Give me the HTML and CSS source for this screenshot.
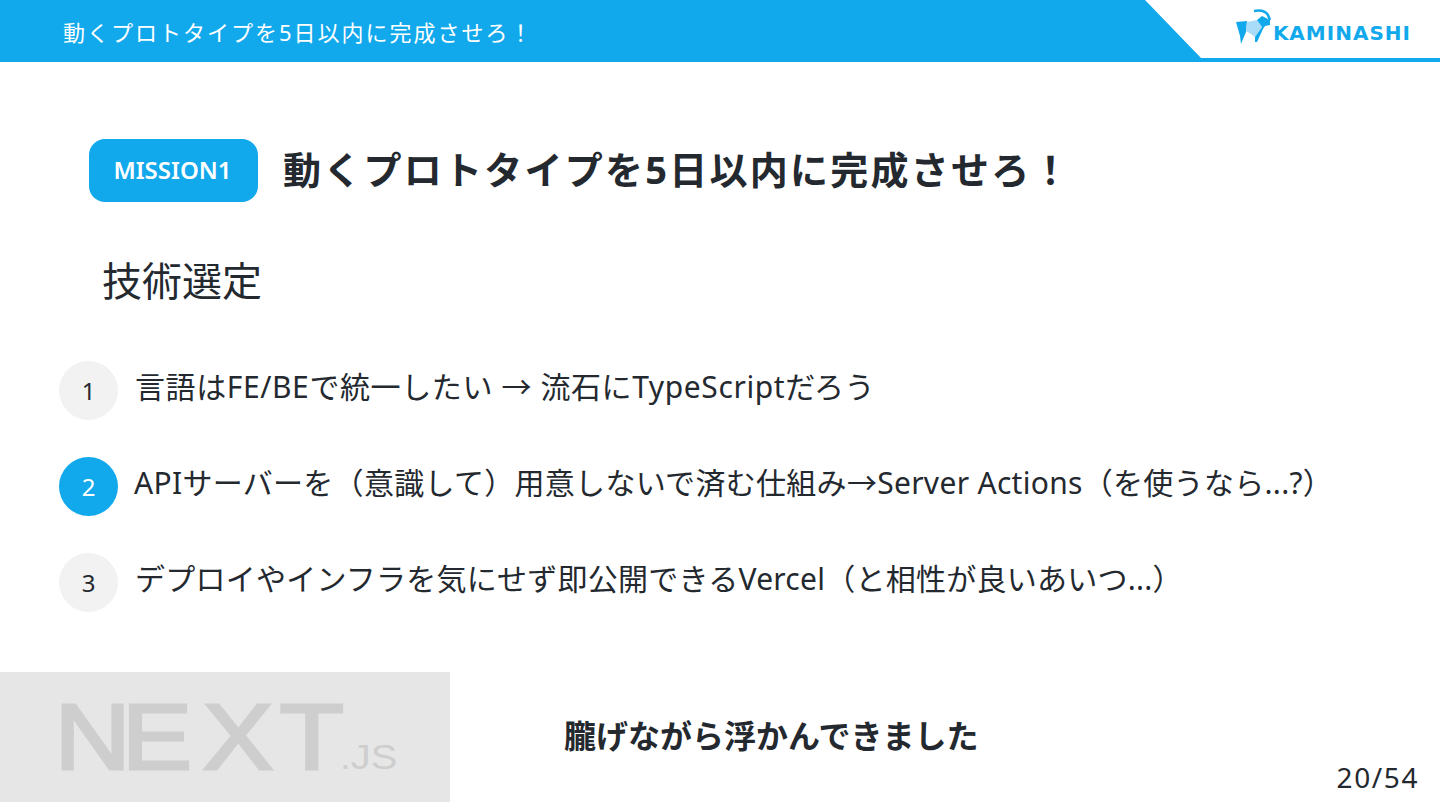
FILE: index.html
```html
<!DOCTYPE html>
<html lang="ja">
<head>
<meta charset="utf-8">
<title>MISSION1</title>
<link rel="stylesheet" href="styles.css">
</head>
<body>
<div class="slide">
  <header class="topbar">
    <div class="topbar-title">動くプロトタイプを5日以内に完成させろ！</div>
    <div class="brand">
      <svg class="goat" width="38" height="38" viewBox="0 0 38 38">
        <path fill="#12a9ec" d="M1 14 L12 13 L11 24 L6 36 L5 28 Z"/>
        <path fill="#a8dcf8" d="M12 14 L22 12 L27 19 L20 29 L16 26 L11 23 Z"/>
        <path fill="#12a9ec" d="M22 12 L27 8 L35 12 L35 17 L30 18 L28 21 L22 34 L20 34 L20 29 L27 19 Z"/>
        <path fill="none" stroke="#12a9ec" stroke-width="2.5" d="M19 3 Q29 1 33 7 L35 12"/>
      </svg>
      <span class="wordmark">KAMINASHI</span>
    </div>
  </header>

  <section class="mission">
    <span class="badge">MISSION1</span>
    <h1 class="mission-title">動くプロトタイプを5日以内に完成させろ！</h1>
  </section>

  <h2 class="section-title">技術選定</h2>

  <ol class="steps">
    <li class="step"><span class="num">1</span><span class="step-text wide">言語はFE/BEで統一したい → 流石にTypeScriptだろう</span></li>
    <li class="step active"><span class="num">2</span><span class="step-text tight">APIサーバーを（意識して）用意しないで済む仕組み→Server Actions（を使うなら...?）</span></li>
    <li class="step"><span class="num">3</span><span class="step-text">デプロイやインフラを気にせず即公開できるVercel（と相性が良いあいつ...）</span></li>
  </ol>

  <footer class="bottom">
    <div class="next-panel">
      <svg class="next-logo" width="450" height="130" viewBox="0 0 450 130">
        <text class="next-wordmark" y="97"><tspan class="next-letters" x="48 107 178 245.5">NEXT</tspan><tspan class="next-js" x="298">.JS</tspan></text>
      </svg>
    </div>
    <p class="caption">朧げながら浮かんできました</p>
    <span class="page">20/54</span>
  </footer>
</div>
</body>
</html>
```
FILE: styles.css
```css
* { box-sizing: border-box; }
html, body { margin: 0; padding: 0; background: #fff; }
body { width: 1440px; height: 810px; overflow: hidden; }
.slide {
  width: 1440px;
  height: 810px;
  display: flex;
  flex-direction: column;
  color: #24292f;
  font-family: "Noto Sans", "Noto Sans CJK JP", sans-serif;
}
.topbar {
  height: 62px;
  flex: none;
  position: relative;
  display: flex;
  align-items: center;
  justify-content: space-between;
  padding: 0 29px 0 63px;
}
.topbar::before {
  content: "";
  position: absolute;
  inset: 0;
  background: #12a9ec;
  clip-path: polygon(0 0, 1145px 0, 1201px 58px, 100% 58px, 100% 100%, 0 100%);
}
.topbar-title {
  position: relative;
  color: #fff;
  font-size: 22px;
  font-weight: 400;
  letter-spacing: 2px;
  margin-top: -1px;
}
.brand { position: relative; display: flex; align-items: center; gap: 0; margin-top: 3px; }
.goat { display: block; margin-bottom: 12px; }
.wordmark {
  font-family: "DejaVu Sans", sans-serif;
  font-weight: 700;
  font-size: 20px;
  letter-spacing: 1px;
  color: #12a9ec;
}
.mission {
  display: flex;
  align-items: center;
  gap: 25px;
  margin: 77px 0 0 89px;
}
.badge {
  width: 169px;
  height: 63px;
  background: #12a9ec;
  border-radius: 16px;
  color: #fff;
  font-size: 24px;
  font-weight: 600;
  display: flex;
  align-items: center;
  justify-content: center;
  padding: 0 2px 2px 0;
}
.mission-title {
  margin: -6px 0 0;
  font-size: 38px;
  font-weight: 700;
  letter-spacing: 2.25px;
}
.section-title {
  margin: 47px 0 0 102px;
  font-size: 40px;
  font-weight: 400;
  line-height: 64px;
}
.steps {
  list-style: none;
  margin: 48px 0 0 59px;
  padding: 0;
  display: flex;
  flex-direction: column;
  gap: 37px;
}
.step { display: flex; align-items: center; gap: 17px; height: 59px; }
.num {
  width: 59px;
  height: 59px;
  flex: none;
  border-radius: 50%;
  background: #f2f2f2;
  display: flex;
  align-items: center;
  justify-content: center;
  font-size: 24px;
  font-weight: 400;
}
.active .num { background: #12a9ec; color: #fff; }
.step-text {
  font-size: 30px;
  font-weight: 400;
  margin-top: -12px;
  letter-spacing: .25px;
}
.step-text.wide { letter-spacing: .6px; }
.step-text.tight { margin-left: -1px; letter-spacing: .3px; }
.bottom {
  display: flex;
  align-items: center;
  height: 130px;
  margin-top: 60px;
  position: relative;
}
.next-panel { width: 450px; height: 130px; background: #e6e6e6; flex: none; }
.next-logo { display: block; }
.next-wordmark {
  font-family: "Liberation Sans", sans-serif;
  fill: #cecece;
  transform: scale(1.14, 1);
}
.next-letters {
  font-size: 92px;
  stroke: #cecece;
  stroke-width: 3px;
}
.next-js { font-size: 35px; }
.caption {
  margin: -6px 0 0 114px;
  font-size: 32px;
  font-weight: 700;
}
.page {
  position: absolute;
  right: 21px;
  bottom: 6px;
  font-size: 28px;
  font-weight: 400;
  letter-spacing: 1.6px;
}
```
